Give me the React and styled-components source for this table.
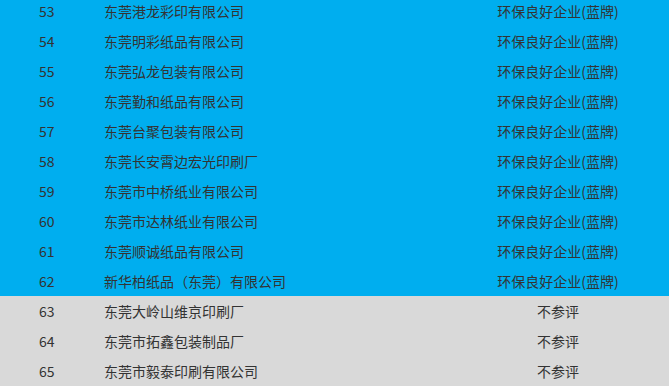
import React from 'react';
import styled, {createGlobalStyle} from 'styled-components';

const GlobalStyle = createGlobalStyle`
  html, body {
    margin: 0;
    padding: 0;
    background: #D9D9D9;
    overflow: hidden;
  }
  body {
    font-family: "Noto Sans CJK SC", "Noto Sans", sans-serif;
  }
`;

const Table = styled.div`
  display: flex;
  flex-direction: column;
  margin-top: -4px;
`;

const Row = styled.div`
  display: grid;
  grid-template-columns: 65px 343px 1fr;
  align-items: center;
  height: 30px;
  padding-left: 39px;
  background: ${p => p.rated ? '#00AEEF' : '#D9D9D9'};
  color: #333333;
  font-size: 14px;
  line-height: 30px;
`;

const Num = styled.span`
  text-align: left;
`;

const Name = styled.span`
  text-align: left;
  white-space: nowrap;
`;

const Status = styled.span`
  text-align: center;
  white-space: nowrap;
`;

const rows = [
    [53, '东莞港龙彩印有限公司', '环保良好企业(蓝牌)'],
    [54, '东莞明彩纸品有限公司', '环保良好企业(蓝牌)'],
    [55, '东莞弘龙包装有限公司', '环保良好企业(蓝牌)'],
    [56, '东莞勤和纸品有限公司', '环保良好企业(蓝牌)'],
    [57, '东莞台聚包装有限公司', '环保良好企业(蓝牌)'],
    [58, '东莞长安霄边宏光印刷厂', '环保良好企业(蓝牌)'],
    [59, '东莞市中桥纸业有限公司', '环保良好企业(蓝牌)'],
    [60, '东莞市达林纸业有限公司', '环保良好企业(蓝牌)'],
    [61, '东莞顺诚纸品有限公司', '环保良好企业(蓝牌)'],
    [62, '新华柏纸品（东莞）有限公司', '环保良好企业(蓝牌)'],
    [63, '东莞大岭山维京印刷厂', '不参评'],
    [64, '东莞市拓鑫包装制品厂', '不参评'],
    [65, '东莞市毅泰印刷有限公司', '不参评'],
];

const App = () =>
{
    return (
        <>
            <GlobalStyle/>
            <Table>
                {rows.map(([n, name, status]) => (
                    <Row key={n} rated={status !== '不参评'}>
                        <Num>{n}</Num>
                        <Name>{name}</Name>
                        <Status>{status}</Status>
                    </Row>
                ))}
            </Table>
        </>
    );
};

export default App;
